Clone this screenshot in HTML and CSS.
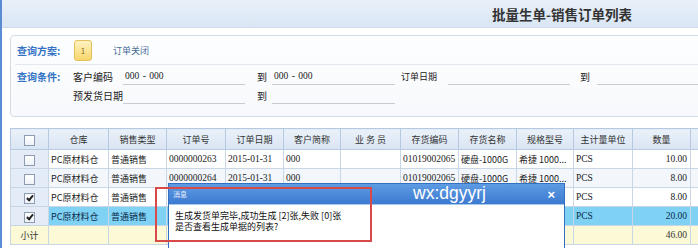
FILE: index.html
```html
<!DOCTYPE html>
<html lang="zh-CN">
<head>
  <meta charset="UTF-8" />
  <title>批量生单-销售订单列表</title>
  <link rel="stylesheet" href="styles.css">
</head>
<body>

  <div class="titlebar">
    <h1>批量生单-销售订单列表</h1>
  </div>

  <div class="query">
    <div class="scheme">
      <span class="q-label">查询方案:</span>
      <span class="scheme-btn">1</span>
      <span class="scheme-link">订单关闭</span>
    </div>
    <div class="cond">
      <span class="q-label">查询条件:</span>
      <div class="fields">
        <span class="f-name">客户编码</span>
        <span class="f-input">000 - 000</span>
        <span class="f-to">到</span>
        <span class="f-input">000 - 000</span>
        <span class="f-name wide">订单日期</span>
        <span class="f-input"></span>
        <span class="f-to near">到</span>
        <span class="f-input"></span>

        <span class="f-name">预发货日期</span>
        <span class="f-input"></span>
        <span class="f-to">到</span>
        <span class="f-input"></span>
      </div>
    </div>
  </div>

  <div class="grid-wrap">
    <table class="grid">
      <colgroup>
        <col style="width:38px"><col style="width:60px"><col style="width:58px"><col style="width:59px">
        <col style="width:58px"><col style="width:57px"><col style="width:60px"><col style="width:58px">
        <col style="width:58px"><col style="width:57px"><col style="width:59px"><col style="width:58px">
        <col style="width:60px">
      </colgroup>
      <thead>
        <tr>
          <th class="chk"><span class="box"></span></th>
          <th>仓库</th>
          <th>销售类型</th>
          <th>订单号</th>
          <th>订单日期</th>
          <th>客户简称</th>
          <th>业 务 员</th>
          <th>存货编码</th>
          <th>存货名称</th>
          <th>规格型号</th>
          <th>主计量单位</th>
          <th>数量</th>
          <th></th>
        </tr>
      </thead>
      <tbody>
        <tr>
          <td class="chk"><span class="box"></span></td>
          <td>PC原材料仓</td>
          <td>普通销售</td>
          <td class="n">0000000263</td>
          <td class="n">2015-01-31</td>
          <td class="n">000</td>
          <td></td>
          <td class="n">01019002065</td>
          <td>硬盘-1000G</td>
          <td>希捷 1000...</td>
          <td class="n">PCS</td>
          <td class="n r">10.00</td>
          <td></td>
        </tr>
        <tr class="alt">
          <td class="chk"><span class="box"></span></td>
          <td>PC原材料仓</td>
          <td>普通销售</td>
          <td class="n">0000000264</td>
          <td class="n">2015-01-31</td>
          <td class="n">000</td>
          <td></td>
          <td class="n">01019002065</td>
          <td>硬盘-1000G</td>
          <td>希捷 1000...</td>
          <td class="n">PCS</td>
          <td class="n r">8.00</td>
          <td></td>
        </tr>
        <tr>
          <td class="chk"><span class="box on"></span></td>
          <td>PC原材料仓</td>
          <td>普通销售</td>
          <td></td><td></td><td></td><td></td><td></td><td></td><td></td>
          <td class="n">PCS</td>
          <td class="n r">8.00</td>
          <td></td>
        </tr>
        <tr class="sel">
          <td class="chk"><span class="box on"></span></td>
          <td>PC原材料仓</td>
          <td>普通销售</td>
          <td></td><td></td><td></td><td></td><td></td><td></td><td></td>
          <td class="n">PCS</td>
          <td class="n r">20.00</td>
          <td></td>
        </tr>
        <tr class="total">
          <td class="chk">小计</td>
          <td></td><td></td><td></td><td></td><td></td><td></td>
          <td></td><td></td><td></td><td></td>
          <td class="n r">46.00</td>
          <td></td>
        </tr>
      </tbody>
    </table>
  </div>

  <div class="dialog">
    <div class="dlg-head">
      <span class="dlg-title">消息</span>
      <span class="dlg-mark">wx:dgyyrj</span>
      <span class="dlg-close">×</span>
    </div>
    <div class="dlg-body">
      生成发货单完毕,成功生成 [2]张,失败 [0]张<br>
      是否查看生成单据的列表?
    </div>
  </div>

  <div class="highlight"></div>

</body>
</html>
```

FILE: styles.css
```css
html, body {
  margin: 0;
  height: 100%;
  overflow: hidden;
}

body {
  background: #fff;
  border-left: 2px solid #5b8bd2;
  font-family: "Noto Sans CJK SC", sans-serif;
  color: #222;
}

.titlebar {
  height: 27px;
  background: linear-gradient(#e9f0f9, #d9e6f4);
  border-bottom: 1px solid #cfdcec;
  display: flex;
  align-items: center;
  justify-content: flex-end;
  padding-right: 66px;
}

.titlebar h1 {
  margin: 0;
  font-size: 13.5px;
  font-weight: bold;
  color: #333;
}

/* query panel */
.query {
  margin: 7px 0 0 8px;
  width: 760px;
  height: 80px;
  border: 1px solid #d3dbe5;
  border-radius: 4px;
  background: linear-gradient(#fdfeff, #f7f9fc);
  padding-left: 4px;
}

.q-label {
  width: 56px;
  flex: none;
  color: #3473c4;
  font-size: 10px;
  font-weight: bold;
}

.scheme {
  height: 28px;
  display: flex;
  align-items: center;
  padding-left: 2px;
  border-bottom: 1px solid #e2e8ef;
}

.scheme-btn {
  margin-left: 1px;
  width: 18px;
  height: 21px;
  box-sizing: border-box;
  border: 1px solid #e2c15c;
  border-radius: 3px;
  background: linear-gradient(#fff3c2, #f7d66c);
  font-size: 8px;
  color: #8a6a20;
  display: flex;
  align-items: center;
  justify-content: center;
}

.scheme-link {
  margin-left: 21px;
  font-size: 9px;
  color: #4a6d96;
}

.cond {
  display: flex;
  padding: 2px 0 0 2px;
}

.cond .q-label {
  line-height: 19px;
}

.fields {
  display: grid;
  grid-template-columns: 50px 122px 27px 123px 53px 122px 27px 122px;
  grid-auto-rows: 19px;
  font-size: 10px;
  color: #222;
}

.f-name {
  line-height: 19px;
}

.f-name.wide {
  padding-left: 6px;
  font-size: 9px;
}

.f-to {
  padding-left: 12px;
  line-height: 19px;
}

.f-to.near {
  padding-left: 10px;
}

.f-input {
  border-bottom: 1px solid #c9cdd3;
  margin-bottom: 1px;
  padding-left: 2px;
  line-height: 18px;
  font-family: "Liberation Serif", "Noto Sans CJK SC", serif;
  font-size: 9.5px;
  word-spacing: 1px;
}

/* list */
.grid-wrap {
  margin: 11px 0 0 8px;
  width: 740px;
  overflow: hidden;
}

.grid {
  border-collapse: collapse;
  table-layout: fixed;
  width: 740px;
  font-size: 9px;
}

.grid th {
  height: 20px;
  padding: 0;
  font-weight: normal;
  color: #333;
  background: linear-gradient(#eaf1f9, #d9e5f3);
  border: 1px solid #b7c9e0;
}

.grid td {
  height: 18px;
  padding: 0 3px 0 2px;
  border: 1px solid #c9d6e6;
  white-space: nowrap;
  overflow: hidden;
}

.grid td.n {
  font-family: "Liberation Serif", "Noto Sans CJK SC", serif;
  font-size: 9.5px;
}

.grid td.r {
  text-align: right;
}

.grid td.chk {
  text-align: center;
  background: #e4ecf7;
  padding: 0;
}

.grid tr.alt td {
  background: #f3f7fc;
}

.grid tr.alt td.chk {
  background: #e4ecf7;
}

.grid tr.sel td {
  background: #7fd2f4;
  color: #0d2a4a;
}

.grid tr.sel td.chk {
  background: #e4ecf7;
}

.grid tr.total td {
  background: #fbf9d6;
  color: #333;
}

.box {
  display: inline-block;
  vertical-align: middle;
  width: 9px;
  height: 9px;
  border: 1px solid #8d9cb1;
  background: linear-gradient(#fff, #eef2f7);
  position: relative;
}

.box.on::after {
  content: "";
  position: absolute;
  left: 3px;
  top: 0px;
  width: 2px;
  height: 5px;
  border: solid #222;
  border-width: 0 2px 2px 0;
  transform: rotate(40deg);
}

/* message box over the list */
.dialog {
  position: absolute;
  left: 168px;
  top: 183px;
  width: 397px;
  height: 90px;
  box-sizing: border-box;
  border: 1px solid #3470c2;
  background: #fff;
}

.dlg-head {
  height: 20px;
  background: linear-gradient(#5e9be3, #3c7ad1);
  border-bottom: 1px solid #a8c8ee;
  display: flex;
  align-items: center;
  position: relative;
}

.dlg-title {
  padding-left: 4px;
  font-size: 7px;
  color: #e8f0fb;
}

.dlg-mark {
  position: absolute;
  left: 244px;
  top: 0;
  line-height: 19px;
  font-family: "Liberation Sans", sans-serif;
  font-size: 17.5px;
  color: #fff;
}

.dlg-close {
  margin-left: auto;
  padding-right: 9px;
  font-family: "Liberation Sans", sans-serif;
  font-size: 13px;
  font-weight: bold;
  color: #fff;
}

.dlg-body {
  padding: 5px 6px;
  font-size: 9px;
  line-height: 11px;
  color: #111;
}

.highlight {
  position: absolute;
  left: 155px;
  top: 187px;
  width: 213px;
  height: 51px;
  border: 2px solid #d84a4a;
}
```
